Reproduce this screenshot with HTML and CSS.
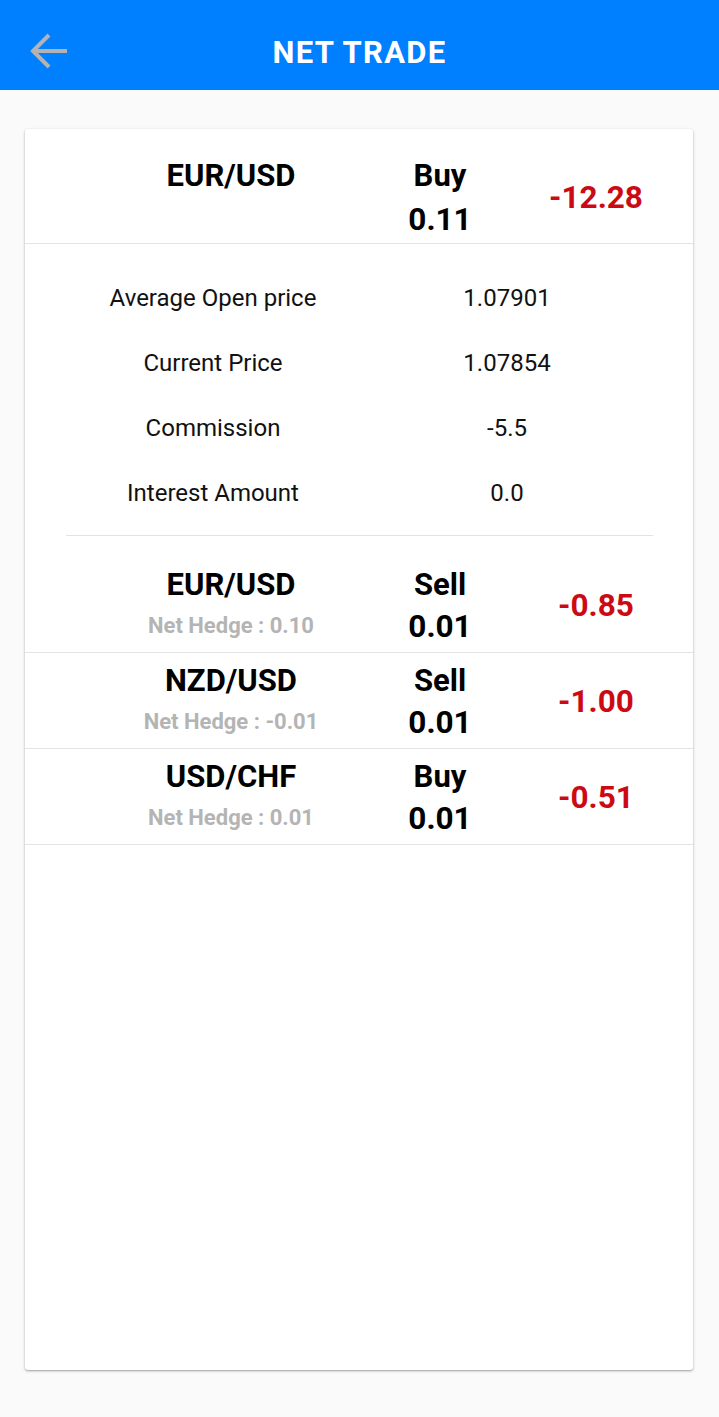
FILE: index.html
```html
<!DOCTYPE html>
<html lang="en">
<head>
<meta charset="utf-8">
<title>Net Trade</title>
<link rel="stylesheet" href="styles.css">
</head>
<body>
<header class="appbar">
  <button class="back" aria-label="Back">
    <svg viewBox="0 0 40 40" width="40" height="40">
      <path d="M38 19H5M20 3L4 19l16 16" fill="none" stroke="#b3b3b3" stroke-width="4" stroke-linecap="butt" stroke-linejoin="miter"/>
    </svg>
  </button>
  <h1 class="title">NET TRADE</h1>
  <span></span>
</header>
<main class="content">
  <section class="card">
    <div class="trade main-trade">
      <div class="pair">
        <div class="pair-name">EUR/USD</div>
      </div>
      <div class="side">
        <div class="side-name">Buy</div>
        <div class="qty">0.11</div>
      </div>
      <div class="pl">-12.28</div>
    </div>
    <div class="details">
      <div class="detail-row"><span class="label">Average Open price</span><span class="value">1.07901</span></div>
      <div class="detail-row"><span class="label">Current Price</span><span class="value">1.07854</span></div>
      <div class="detail-row"><span class="label">Commission</span><span class="value">-5.5</span></div>
      <div class="detail-row"><span class="label">Interest Amount</span><span class="value">0.0</span></div>
      <hr class="divider">
    </div>
    <div class="trade sub-trade">
      <div class="pair">
        <div class="pair-name">EUR/USD</div>
        <div class="hedge">Net Hedge : 0.10</div>
      </div>
      <div class="side">
        <div class="side-name">Sell</div>
        <div class="qty">0.01</div>
      </div>
      <div class="pl">-0.85</div>
    </div>
    <div class="trade sub-trade">
      <div class="pair">
        <div class="pair-name">NZD/USD</div>
        <div class="hedge">Net Hedge : -0.01</div>
      </div>
      <div class="side">
        <div class="side-name">Sell</div>
        <div class="qty">0.01</div>
      </div>
      <div class="pl">-1.00</div>
    </div>
    <div class="trade sub-trade">
      <div class="pair">
        <div class="pair-name">USD/CHF</div>
        <div class="hedge">Net Hedge : 0.01</div>
      </div>
      <div class="side">
        <div class="side-name">Buy</div>
        <div class="qty">0.01</div>
      </div>
      <div class="pl">-0.51</div>
    </div>
  </section>
</main>
</body>
</html>
```
FILE: styles.css
```css
* { box-sizing: border-box; }
html, body { margin: 0; padding: 0; }
body {
  background: #fafafa;
  font-family: Roboto, "Liberation Sans", sans-serif;
  color: #000;
  height: 100vh;
  display: flex;
  flex-direction: column;
}
.appbar {
  height: 90px;
  flex: none;
  background: #007fff;
  display: grid;
  grid-template-columns: 1fr auto 1fr;
  align-items: center;
  padding-top: 14px;
}
.back {
  justify-self: start;
  margin-left: 29px;
  padding: 0;
  border: 0;
  background: none;
  width: 40px;
  height: 40px;
  display: flex;
}
.title {
  margin: 0;
  color: #fff;
  font-size: 31px;
  font-weight: 700;
  letter-spacing: 1.3px;
  line-height: 1;
}
.content {
  flex: 1;
  padding: 39px 26px 47px 25px;
  display: flex;
}
.card {
  flex: 1;
  background: #fff;
  border-radius: 3px;
  box-shadow: 0 1px 3px rgba(0,0,0,0.28), 0 1px 1px rgba(0,0,0,0.12);
  overflow: hidden;
}
.trade {
  display: grid;
  grid-template-columns: 252px 166px 146px;
  padding-left: 80px;
  border-bottom: 1px solid #e3e3e3;
  text-align: center;
  font-weight: 700;
}
.main-trade { height: 115px; padding-top: 26px; }
.sub-trade { height: 96px; padding-top: 7px; }
.pair-name, .side-name, .qty, .hedge { line-height: 42px; }
.pair-name, .side-name { font-size: 31px; }
.qty { font-size: 31.5px; }
.main-trade .qty { margin-top: 2px; }
.hedge { font-size: 22px; color: #b4b4b4; margin-top: -1px; }
.pl {
  align-self: center;
  color: #cc0a14;
  font-size: 31.5px;
  line-height: 42px;
}
.main-trade .pl { align-self: start; margin-top: 22px; }
.sub-trade .pl { margin-bottom: 4px; }
.details { padding-top: 21px; }
.detail-row {
  display: grid;
  grid-template-columns: 1fr 1fr;
  margin: 0 39px 0 41px;
  height: 65px;
  align-items: center;
  text-align: center;
  font-size: 24px;
  color: #111;
}
.divider {
  border: 0;
  border-top: 1px solid #e3e3e3;
  margin: 10px 40px 21px 41px;
  height: 0;
}
```
